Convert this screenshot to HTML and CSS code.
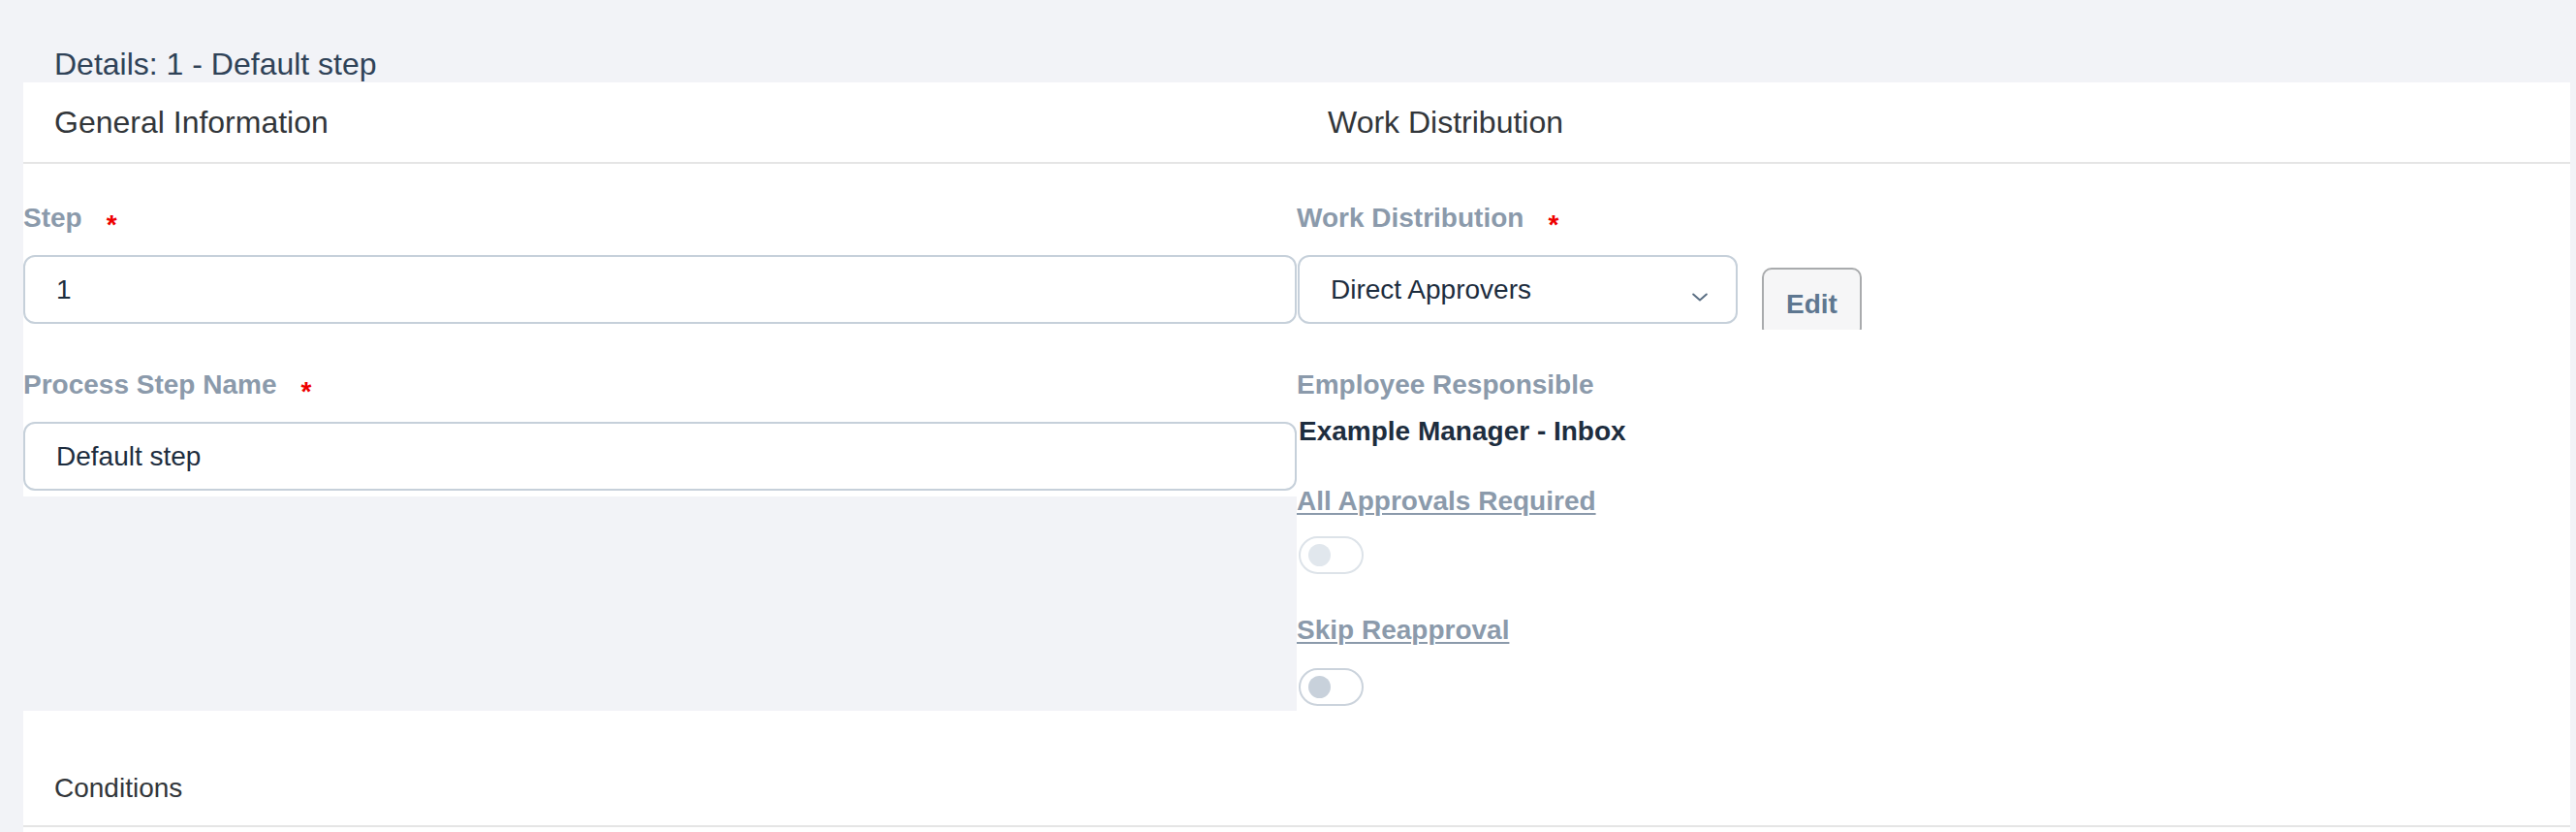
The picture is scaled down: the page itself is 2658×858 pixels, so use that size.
FILE: index.html
```html
<!DOCTYPE html>
<html lang="en">
<head>
<meta charset="utf-8">
<title>Details: 1 - Default step</title>
<link rel="stylesheet" href="styles.css">
</head>
<body>
<div class="page">
  <div class="page-title">Details: 1 - Default step</div>

  <div class="panel-head">
    <div class="col-title">General Information</div>
    <div class="col-title">Work Distribution</div>
  </div>

  <div class="panel-body">
    <section class="col col-left">
      <div class="field">
        <div class="field-label">Step<span class="req">*</span></div>
        <div class="input">1</div>
      </div>
      <div class="field field-next">
        <div class="field-label">Process Step Name<span class="req">*</span></div>
        <div class="input">Default step</div>
      </div>
    </section>

    <section class="col col-right">
      <div class="field-label">Work Distribution<span class="req">*</span></div>
      <div class="wd-row">
        <div class="input select">
          <span>Direct Approvers</span>
          <svg class="chevron" width="16" height="9" viewBox="0 0 16 9"><path d="M1.2 1.5 L8 7.4 L14.8 1.5" fill="none" stroke="#5b6f84" stroke-width="2" stroke-linecap="round" stroke-linejoin="round"/></svg>
        </div>
        <div class="btn">Edit</div>
      </div>
      <div class="field-label emp-label">Employee Responsible</div>
      <div class="value">Example Manager - Inbox</div>
      <div class="field-label link-label approvals">All Approvals Required</div>
      <div class="switch switch-first"><span class="knob"></span></div>
      <div class="field-label link-label skip">Skip Reapproval</div>
      <div class="switch switch-second"><span class="knob"></span></div>
    </section>
  </div>

  <div class="conditions">
    <div class="cond-title">Conditions</div>
  </div>
  <div class="conditions-body"></div>
</div>
</body>
</html>
```

FILE: styles.css
```css
html, body {
  margin: 0;
  overflow: hidden;
}

body {
  background: #f2f3f7;
  font-family: "Liberation Sans", Arial, sans-serif;
  color: #1d2d3e;
}

.page {
  padding: 0 6px 0 24px;
}

.page-title {
  padding: 48px 0 1px 32px;
  font-size: 32px;
  line-height: 36px;
  color: #2f4257;
}

.panel-head {
  display: grid;
  grid-template-columns: 1fr 1fr;
  background: #fff;
  border-bottom: 2px solid #e5e5e5;
}

.col-title {
  padding: 23px 32px;
  font-size: 32px;
  line-height: 36px;
  color: #32363a;
}

.panel-body {
  display: grid;
  grid-template-columns: 1fr 1fr;
  align-items: start;
}

.col {
  background: #fff;
  padding-top: 40px;
}

.col-left {
  padding-bottom: 6px;
}

.col-right {
  padding-bottom: 5px;
}

.field-label {
  font-size: 28px;
  line-height: 32px;
  font-weight: bold;
  color: #8b9aab;
}

.field .field-label,
.col-right > .field-label:first-child {
  margin-bottom: 22px;
}

.req {
  color: #ee0000;
  margin-left: 25px;
  line-height: 0;
  vertical-align: -7px;
}

.field-next {
  margin-top: 47px;
}

.input {
  box-sizing: border-box;
  height: 71px;
  border: 2px solid #c6d0da;
  border-radius: 12px;
  padding: 0 32px;
  display: flex;
  align-items: center;
  background: #fff;
  font-size: 28px;
  line-height: 32px;
  color: #1d2d3e;
}

.wd-row {
  display: flex;
  align-items: flex-start;
  gap: 25px;
  height: 77px;
  overflow: hidden;
  margin-left: 1px;
}

.select {
  width: 454px;
  flex: none;
  justify-content: space-between;
  padding-right: 29px;
}

.chevron {
  margin-top: 16px;
}

.btn {
  box-sizing: border-box;
  flex: none;
  margin-top: 13px;
  width: 103px;
  height: 72px;
  padding-top: 3px;
  border: 2px solid #a9abad;
  border-radius: 10px;
  background: #f6f6f7;
  display: flex;
  align-items: center;
  justify-content: center;
  font-size: 28px;
  line-height: 32px;
  font-weight: bold;
  color: #5e7790;
}

.emp-label {
  margin-top: 41px;
}

.value {
  margin-top: 16px;
  margin-left: 2px;
  font-size: 28px;
  line-height: 32px;
  font-weight: bold;
  color: #1d2d3e;
}

.link-label {
  text-decoration: underline;
  text-decoration-thickness: 2px;
  text-underline-offset: 3px;
}

.approvals {
  margin-top: 40px;
}

.skip {
  margin-top: 42px;
}

.switch {
  box-sizing: border-box;
  width: 67px;
  height: 39px;
  margin-left: 2px;
  border: 2px solid #dde3e9;
  border-radius: 20px;
  background: #fff;
  display: flex;
  align-items: center;
  padding-left: 8px;
}

.knob {
  width: 23px;
  height: 23px;
  border-radius: 50%;
  background: #e1e7ed;
}

.switch-first {
  margin-top: 20px;
}

.switch-second {
  margin-top: 23px;
  border-color: #cbd3dc;
}

.switch-second .knob {
  background: #c8d1db;
}

.conditions {
  background: #fff;
  padding: 64px 32px 22px;
  border-bottom: 2px solid #e5e5e5;
}

.cond-title {
  font-size: 28px;
  line-height: 32px;
  color: #32363a;
}

.conditions-body {
  background: #fff;
  height: 40px;
}
```
